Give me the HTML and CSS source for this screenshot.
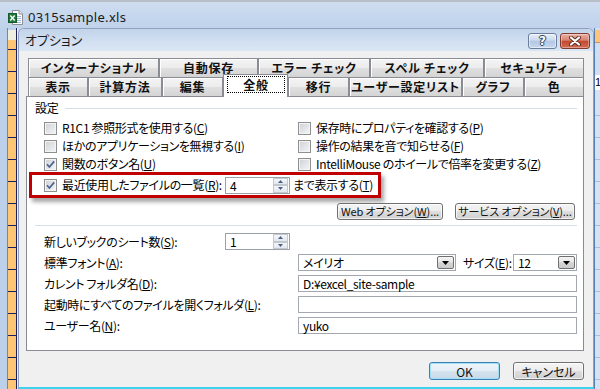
FILE: index.html
```html
<!DOCTYPE html>
<html lang="ja">
<head>
<meta charset="utf-8">
<title>オプション</title>
<link rel="stylesheet" href="styles.css">
</head>
<body>
<div class="app">
  <div class="apptitle">
    <svg class="xlicon" width="15" height="15" viewBox="0 0 15 15">
      <path d="M4.5 0.5 H11 L14.5 4 V14.5 H4.5 Z" fill="#fff" stroke="#8a8f99"/>
      <path d="M11 0.5 V4 H14.5" fill="#e6e9ee" stroke="#8a8f99"/>
      <path d="M9 6.5 H13 M9 8.5 H13 M9 10.5 H13 M9 12.5 H13" stroke="#9fb6d4"/>
      <rect x="0.5" y="3.5" width="8" height="9" fill="#1f7a3c" stroke="#145a2a"/>
      <path d="M2.3 5.5 L6.7 10.5 M6.7 5.5 L2.3 10.5" stroke="#fff" stroke-width="1.4"/>
    </svg>
    <span class="apptitle-text">0315sample.xls</span>
  </div>
  <div class="work">
    <div class="leftframe">
      <div class="lf-blue"></div>
      <div class="rowheads"></div>
      <div class="lf-gap"></div>
    </div>
    <div class="dialog ui">
      <div class="dlg-title">
        <span class="dlg-title-text">オプション</span>
        <div class="capbtns">
          <div class="capbtn help"><span class="qmark">?</span></div>
          <div class="capbtn close">
            <svg width="14" height="10" viewBox="0 0 14 10">
              <path d="M3 1.5 L11 8.5 M11 1.5 L3 8.5" stroke="#5a2a22" stroke-width="4" stroke-linecap="round"/>
              <path d="M3 1.5 L11 8.5 M11 1.5 L3 8.5" stroke="#fff" stroke-width="2.2" stroke-linecap="round"/>
            </svg>
          </div>
        </div>
      </div>
      <div class="client">
        <div class="tabs">
          <div class="tabrow">
            <div class="tab w131">インターナショナル</div>
            <div class="tab w99">自動保存</div>
            <div class="tab w112">エラー チェック</div>
            <div class="tab w114">スペル チェック</div>
            <div class="tab w100">セキュリティ</div>
          </div>
          <div class="tabrow">
            <div class="tab w60">表示</div>
            <div class="tab w74">計算方法</div>
            <div class="tab w61">編集</div>
            <div class="tab w65 active"><span class="focus">全般</span></div>
            <div class="tab w61">移行</div>
            <div class="tab w113">ユーザー設定リスト</div>
            <div class="tab w62">グラフ</div>
            <div class="tab w60">色</div>
          </div>
        </div>
        <div class="panel">
          <div class="grouphead"><span class="gh-label">設定</span><span class="gh-line"></span></div>
          <div class="checkgrid">
            <div class="chk"><span class="cb"></span><span>R1C1 参照形式を使用する(<u>C</u>)</span></div>
            <div class="chk"><span class="cb"></span><span>保存時にプロパティを確認する(<u>P</u>)</span></div>
            <div class="chk"><span class="cb"></span><span>ほかのアプリケーションを無視する(<u>I</u>)</span></div>
            <div class="chk"><span class="cb"></span><span>操作の結果を音で知らせる(<u>F</u>)</span></div>
            <div class="chk"><span class="cb checked"><svg width="11" height="11" viewBox="0 0 11 11"><path d="M2 5.3 L4.4 8 L9.2 2.4" fill="none" stroke="#4a6290" stroke-width="1.7"/></svg></span><span>関数のボタン名(<u>U</u>)</span></div>
            <div class="chk"><span class="cb"></span><span>IntelliMouse のホイールで倍率を変更する(<u>Z</u>)</span></div>
          </div>
          <div class="hilite">
            <span class="cb checked"><svg width="11" height="11" viewBox="0 0 11 11"><path d="M2 5.3 L4.4 8 L9.2 2.4" fill="none" stroke="#4a6290" stroke-width="1.7"/></svg></span>
            <span class="hl-label">最近使用したファイルの一覧(<u>R</u>):</span>
            <div class="spin">
              <span class="spin-val">4</span>
              <span class="spin-btns">
                <span class="sb"><svg width="5" height="3" viewBox="0 0 5 3"><path d="M0 3 L2.5 0 L5 3 Z" fill="#4d6185"/></svg></span>
                <span class="sb"><svg width="5" height="3" viewBox="0 0 5 3"><path d="M0 0 L5 0 L2.5 3 Z" fill="#4d6185"/></svg></span>
              </span>
            </div>
            <span class="hl-after">まで表示する(<u>T</u>)</span>
          </div>
          <div class="btnrow">
            <div class="btn w106">Web オプション(<u>W</u>)...</div>
            <div class="btn w120">サービス オプション(<u>V</u>)...</div>
          </div>
          <div class="sep2"></div>
          <div class="form">
            <div class="frow">
              <span class="flabel short">新しいブックのシート数(<u>S</u>):</span>
              <div class="spin">
                <span class="spin-val">1</span>
                <span class="spin-btns">
                  <span class="sb"><svg width="5" height="3" viewBox="0 0 5 3"><path d="M0 3 L2.5 0 L5 3 Z" fill="#4d6185"/></svg></span>
                  <span class="sb"><svg width="5" height="3" viewBox="0 0 5 3"><path d="M0 0 L5 0 L2.5 3 Z" fill="#4d6185"/></svg></span>
                </span>
              </div>
            </div>
            <div class="frow">
              <span class="flabel">標準フォント(<u>A</u>):</span>
              <div class="combo cfont"><span class="cval">メイリオ</span><span class="ddbtn"><svg width="7" height="4" viewBox="0 0 7 4"><path d="M0 0 L7 0 L3.5 4 Z" fill="#000"/></svg></span></div>
              <span class="sizelabel">サイズ(<u>E</u>):</span>
              <div class="combo csize"><span class="cval">12</span><span class="ddbtn"><svg width="7" height="4" viewBox="0 0 7 4"><path d="M0 0 L7 0 L3.5 4 Z" fill="#000"/></svg></span></div>
            </div>
            <div class="frow">
              <span class="flabel">カレント フォルダ名(<u>D</u>):</span>
              <div class="field">D:¥excel_site-sample</div>
            </div>
            <div class="frow">
              <span class="flabel">起動時にすべてのファイルを開くフォルダ(<u>L</u>):</span>
              <div class="field"></div>
            </div>
            <div class="frow">
              <span class="flabel">ユーザー名(<u>N</u>):</span>
              <div class="field">yuko</div>
            </div>
          </div>
        </div>
        <div class="footer">
          <div class="btn w71 default">OK</div>
          <div class="btn w71">キャンセル</div>
        </div>
      </div>
    </div>
    <div class="rightstrip">
      <div class="rs-top"></div>
      <div class="rs-mid"></div>
      <div class="rs-one">1</div>
      <div class="rs-rest"></div>
    </div>
  </div>
</div>
</body>
</html>
```
FILE: styles.css
```css
* { box-sizing: border-box; }
html, body { margin: 0; padding: 0; }
body {
  width: 600px;
  height: 389px;
  overflow: hidden;
  background: #c4d6ed;
  font-family: "Noto Sans CJK JP", "Noto Sans", sans-serif;
  font-size: 12px;
  color: #000;
}
.ui { font-feature-settings: "palt"; }
u { text-decoration: underline; text-underline-offset: 1px; }

.app {
  width: 600px;
  height: 389px;
  display: flex;
  flex-direction: column;
  overflow: hidden;
}

/* Excel window title */
.apptitle {
  height: 28px;
  flex: none;
  display: flex;
  align-items: center;
  gap: 5px;
  padding-left: 8px;
  padding-top: 4px;
  border-top: 2px solid #b9bfc8;
  background: linear-gradient(#d0ddef, #c4d6ed 60%, #c0d3ea);
}
.xlicon { display: block; }
.apptitle-text {
  font-family: "Noto Sans", sans-serif;
  font-size: 13px;
  letter-spacing: 0.3px;
  color: #1a1a1a;
}

.work { flex: 1; display: flex; min-height: 0; }

/* left excel frame */
.leftframe { width: 18px; flex: none; display: flex; }
.lf-blue { width: 7px; background: #bcd0ea; }
.rowheads {
  width: 10px;
  border-left: 1px solid #80848c;
  border-right: 1px solid #20205e;
  background:
    linear-gradient(#bcd0ea 0 2px, #efece0 2px 12px, transparent 12px),
    repeating-linear-gradient(#fec575 0 21px, #1d1d62 21px 22px);
}
.lf-gap { width: 1px; background: #e8edf5; }

/* dialog */
.dialog {
  width: 576px;
  flex: none;
  display: flex;
  flex-direction: column;
  border: 1px solid #8fa2bd;
  border-bottom: 2px solid #3ed2ef;
  border-radius: 6px 6px 0 0;
  overflow: hidden;
  background: #f0f0f0;
}
.dlg-title {
  height: 22px;
  flex: none;
  display: flex;
  justify-content: space-between;
  align-items: flex-start;
  padding: 0 3px 0 6px;
  background: linear-gradient(#c2d4ea, #d2e0f1 60%, #d9e6f4);
}
.dlg-title-text {
  font-size: 13px;
  line-height: 22px;
  color: #1b1b1b;
}
.capbtns { display: flex; gap: 3px; padding-top: 4px; }
.capbtn {
  height: 16px;
  border-radius: 3px;
  display: flex;
  align-items: center;
  justify-content: center;
}
.help {
  width: 29px;
  border: 1px solid #6b7f9c;
  background: linear-gradient(#e6eef8, #cbdaee 45%, #b2c7e3 50%, #c6d8ef);
  box-shadow: inset 0 0 0 1px rgba(255,255,255,0.5);
}
.qmark {
  font-family: "DejaVu Sans", sans-serif;
  font-weight: bold;
  font-size: 12px;
  line-height: 14px;
  color: #fff;
  text-shadow: 0 0 1px #2e4260, 1px 0 0 #2e4260, -1px 0 0 #2e4260, 0 1px 0 #2e4260, 0 -1px 0 #2e4260;
}
.close {
  width: 30px;
  border: 1px solid #7d3b31;
  background: linear-gradient(#eab0a4, #d9826f 45%, #c3472f 50%, #d36a52);
  box-shadow: inset 0 0 0 1px rgba(255,255,255,0.35);
}
.close svg { display: block; }

.client {
  flex: 1;
  padding: 7px 9px 7px 7px;
}

/* tabs */
.tabs { margin-left: 2px; }
.tabrow { display: flex; height: 19px; }
.tab {
  flex: none;
  height: 19px;
  border: 1px solid #898c95;
  border-bottom: none;
  background: linear-gradient(#f4f4f4, #ececec 50%, #e0e0e0 50%, #d4d4d4);
  box-shadow: inset 1px 1px 0 #fff;
  display: flex;
  align-items: center;
  justify-content: center;
  font-size: 12px;
  font-weight: bold;
  letter-spacing: 0.7px;
  line-height: 16px;
  color: #111;
  white-space: nowrap;
}
.tab.active {
  height: 23px;
  margin-top: -3px;
  background: #fff;
  box-shadow: none;
  position: relative;
  z-index: 1;
  align-items: flex-start;
  padding-top: 1px;
}
.focus {
  width: 58px;
  height: 17px;
  border: 1px dotted #000;
  display: flex;
  align-items: center;
  justify-content: center;
  margin-left: 3px;
  margin-right: 2px;
}
.w131 { width: 131px; } .w99 { width: 99px; } .w112 { width: 112px; }
.w114 { width: 114px; } .w100 { width: 100px; } .w60 { width: 60px; }
.w74 { width: 74px; } .w61 { width: 61px; } .w65 { width: 65px; }
.w113 { width: 113px; } .w62 { width: 62px; } .w106 { width: 106px; }
.w120 { width: 120px; } .w71 { width: 71px; }

/* panel */
.panel {
  height: 255px;
  border: 1px solid #898c95;
  background: #fff;
  padding: 3px 6px 0 17px;
  line-height: 16px;
  letter-spacing: -0.35px;
}
.grouphead {
  display: flex;
  align-items: center;
  height: 16px;
  margin-left: -9px;
}
.gh-label { width: 30px; flex: none; }
.gh-line { flex: 1; height: 1px; background: #d5dfe5; }

.checkgrid {
  margin-top: 3px;
  display: grid;
  grid-template-columns: 254px auto;
  grid-auto-rows: 18px;
}
.chk { display: flex; align-items: center; gap: 5px; white-space: nowrap; }
.cb {
  width: 13px;
  height: 13px;
  flex: none;
  border: 1px solid #8e8f8f;
  background: linear-gradient(135deg, #cdd0d6, #f6f6f6);
  box-shadow: inset 0 0 0 1px #f4f4f4;
  display: flex;
  align-items: center;
  justify-content: center;
}
.cb svg { display: block; }

.hilite {
  margin: -1px 0 0 -15px;
  width: 352px;
  height: 26px;
  border: 3px solid #c00000;
  padding-left: 12px;
  display: flex;
  align-items: center;
  box-shadow: 3px 4px 4px rgba(0,0,0,0.35);
  white-space: nowrap;
}
.hl-label { width: 163px; flex: none; margin-left: 5px; }
.hl-after { margin-left: 3px; }

.spin {
  width: 65px;
  height: 17px;
  flex: none;
  border: 1px solid #9ca1a8;
  background: #fff;
  display: flex;
  justify-content: space-between;
  padding: 0 1px 0 4px;
}
.spin-val { line-height: 15px; }
.spin-btns { display: flex; flex-direction: column; width: 15px; }
.sb {
  flex: 1;
  display: flex;
  align-items: center;
  justify-content: center;
  border: 1px solid #c2c8d0;
  background: linear-gradient(#f5f7fa, #e2e7ee);
}
.sb svg { display: block; }

.btnrow {
  margin-top: 5px;
  display: flex;
  justify-content: flex-end;
  gap: 12px;
  padding-right: 2px;
}
.btn {
  height: 17px;
  border: 1px solid #707070;
  border-radius: 3px;
  background: linear-gradient(#f4f4f4, #ececec 50%, #dedede 50%, #d0d0d0);
  box-shadow: inset 0 0 0 1px rgba(255,255,255,0.7);
  display: flex;
  align-items: center;
  justify-content: center;
  font-size: 12px;
  line-height: 15px;
  letter-spacing: 0;
  white-space: nowrap;
  color: #111;
}
.btnrow .btn { font-size: 11px; letter-spacing: -0.1px; }
.sep2 { margin: 5px 0 0 -9px; height: 1px; background: #d5dfe5; }

.form {
  margin-top: 7px;
  display: flex;
  flex-direction: column;
  gap: 4px;
}
.frow { display: flex; align-items: center; height: 17px; white-space: nowrap; }
.flabel { width: 254px; flex: none; }
.flabel.short { width: 181px; }
.combo {
  height: 17px;
  border: 1px solid #a3a8b0;
  background: #fff;
  display: flex;
  justify-content: space-between;
  padding: 0 1px 0 4px;
}
.cfont { width: 158px; }
.csize { width: 64px; margin-left: auto; }
.cval { line-height: 15px; }
.ddbtn {
  width: 17px;
  height: 13px;
  margin-top: 1px;
  border: 1px solid #707070;
  border-radius: 2px;
  background: linear-gradient(#f4f4f4, #e6e6e6 50%, #d6d6d6 50%, #cacaca);
  display: flex;
  align-items: center;
  justify-content: center;
}
.ddbtn svg { display: block; }
.sizelabel { margin-left: 7px; }
.field {
  flex: 1;
  height: 17px;
  border: 1px solid #a3a8b0;
  background: #fff;
  padding-left: 4px;
  line-height: 15px;
}

.footer {
  margin-top: 11px;
  display: flex;
  justify-content: flex-end;
  gap: 13px;
}
.footer .btn { height: 18px; }
.btn.default {
  border-color: #3c7fb1;
  box-shadow: inset 0 0 0 1px #9fe0f8;
  background: linear-gradient(#eef5fa, #e4eef6 50%, #d5e3ee 50%, #c8d9e6);
}

/* right strip of another window */
.rightstrip {
  flex: 1;
  display: flex;
  flex-direction: column;
  border-left: 1px solid #5c7eae;
  background: #cfdff3;
  overflow: hidden;
}
.rs-top { height: 13px; margin-top: 2px; background: #fdc47b; border-bottom: 1px solid #c8945a; }
.rs-mid { height: 32px; }
.rs-one {
  height: 15px;
  background: #fff;
  font-family: "Liberation Sans", sans-serif;
  font-size: 11px;
  line-height: 15px;
  padding-left: 0;
}
.rs-rest {
  flex: 1;
  background: repeating-linear-gradient(#d3e2f4 0 21px, #a5bfe0 21px 22px);
  background-position: 0 4px;
}
```
